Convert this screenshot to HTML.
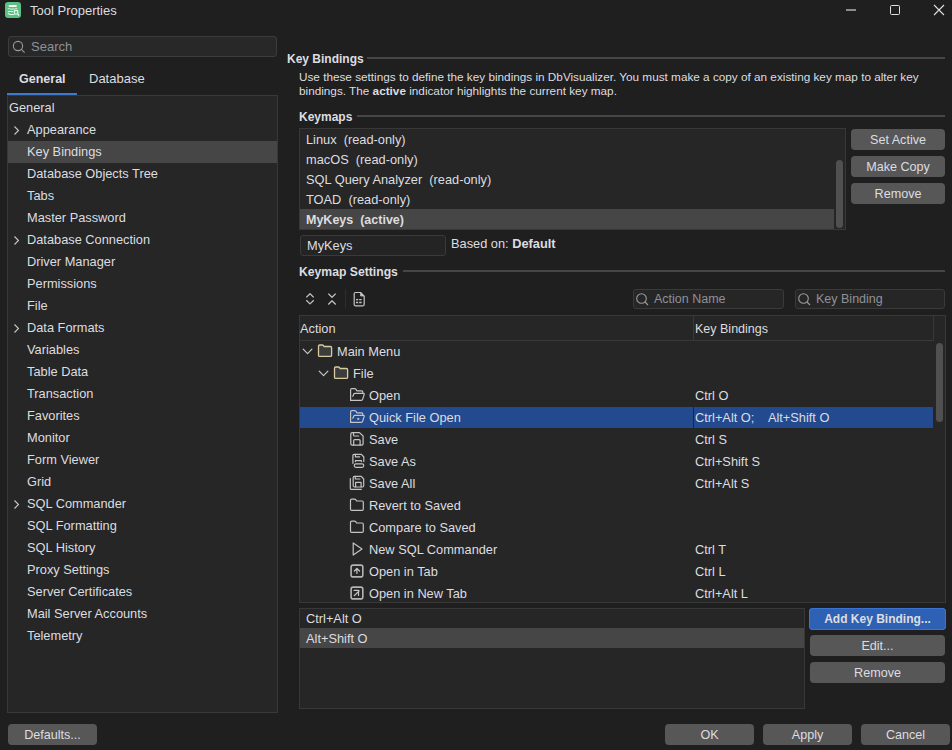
<!DOCTYPE html>
<html><head><meta charset="utf-8">
<style>
*{box-sizing:border-box;margin:0;padding:0}
html,body{width:952px;height:750px;overflow:hidden;background:#1f1f1f}
body{position:relative;font-family:"Liberation Sans",sans-serif;color:#dcdde0;font-size:13px}
.a{position:absolute;white-space:pre}
.b{font-weight:bold}
.btn{position:absolute;border-radius:4px;text-align:center;white-space:pre;color:#dcdde0}
svg{position:absolute;overflow:visible}
</style></head><body>
<svg style="left:5px;top:2px" width="16" height="16" viewBox="0 0 16 16">
  <rect x="0" y="0" width="16" height="16" rx="3.2" fill="#5cc283"/>
  <rect x="3.6" y="3.1" width="8.3" height="1.9" rx="0.95" fill="#f4fbf6"/>
  <g fill="none" stroke="#eef8f1" stroke-width="1.1" stroke-linecap="round">
    <path d="M3.2 6.5q4.4 1.3 8.6 0" stroke-opacity="0.75"/>
    <path d="M3.2 9.5h4.6"/>
    <path d="M3.2 11.4q1 1.1 3 1.1h2.6"/>
    <circle cx="11.1" cy="10.3" r="1.9"/><path d="M12.5 11.7l1.3 1.6"/>
  </g>
</svg>
<div class="a" style="left:30px;top:1px;line-height:20px;font-size:13px">Tool Properties</div>
<div class="a" style="left:846px;top:9px;width:10px;height:2px;background:#8c8c8c"></div>
<div class="a" style="left:890px;top:5px;width:10px;height:10px;border:1px solid #dedede;border-radius:1.5px"></div>
<svg style="left:934px;top:5px" width="10" height="10" viewBox="0 0 10 10"><path d="M0 0l10 10M10 0l-10 10" stroke="#e0e0e0" stroke-width="1.1"/></svg>
<div class="a" style="left:8px;top:36px;width:269px;height:21px;background:#282828;border:1px solid #3c3c3c;border-radius:3px"></div>
<svg style="left:12px;top:40px" width="14" height="14" viewBox="0 0 14 14"><circle cx="6" cy="6" r="4.6" fill="none" stroke="#9c9c9c" stroke-width="1.1"/><path d="M9.4 9.4l3.2 3.2" stroke="#9c9c9c" stroke-width="1.1"/></svg>
<div class="a" style="left:31px;top:37px;line-height:20px;font-size:13px;color:#8f9196">Search</div>
<div class="a b" style="left:19px;top:70px;line-height:18px;font-size:12.5px">General</div>
<div class="a" style="left:89px;top:70px;line-height:18px;font-size:13px">Database</div>
<div class="a" style="left:7px;top:93px;width:70px;height:2px;background:#3d79cf"></div>
<div class="a" style="left:7px;top:95px;width:271px;height:618px;background:#262626;border:1px solid #383838"></div>
<div class="a" style="left:9px;top:97px;line-height:22px;font-size:12.8px">General</div>
<div class="a" style="left:27px;top:119px;line-height:22px;font-size:12.8px">Appearance</div>
<svg style="left:14px;top:126px" width="5" height="9" viewBox="0 0 5 9"><path d="M0.5 0.5l4 4-4 4" fill="none" stroke="#c8c8c8" stroke-width="1.1"/></svg>
<div class="a" style="left:8px;top:141px;width:269px;height:22px;background:#464646"></div>
<div class="a" style="left:27px;top:141px;line-height:22px;font-size:12.8px">Key Bindings</div>
<div class="a" style="left:27px;top:163px;line-height:22px;font-size:12.8px">Database Objects Tree</div>
<div class="a" style="left:27px;top:185px;line-height:22px;font-size:12.8px">Tabs</div>
<div class="a" style="left:27px;top:207px;line-height:22px;font-size:12.8px">Master Password</div>
<div class="a" style="left:27px;top:229px;line-height:22px;font-size:12.8px">Database Connection</div>
<svg style="left:14px;top:236px" width="5" height="9" viewBox="0 0 5 9"><path d="M0.5 0.5l4 4-4 4" fill="none" stroke="#c8c8c8" stroke-width="1.1"/></svg>
<div class="a" style="left:27px;top:251px;line-height:22px;font-size:12.8px">Driver Manager</div>
<div class="a" style="left:27px;top:273px;line-height:22px;font-size:12.8px">Permissions</div>
<div class="a" style="left:27px;top:295px;line-height:22px;font-size:12.8px">File</div>
<div class="a" style="left:27px;top:317px;line-height:22px;font-size:12.8px">Data Formats</div>
<svg style="left:14px;top:324px" width="5" height="9" viewBox="0 0 5 9"><path d="M0.5 0.5l4 4-4 4" fill="none" stroke="#c8c8c8" stroke-width="1.1"/></svg>
<div class="a" style="left:27px;top:339px;line-height:22px;font-size:12.8px">Variables</div>
<div class="a" style="left:27px;top:361px;line-height:22px;font-size:12.8px">Table Data</div>
<div class="a" style="left:27px;top:383px;line-height:22px;font-size:12.8px">Transaction</div>
<div class="a" style="left:27px;top:405px;line-height:22px;font-size:12.8px">Favorites</div>
<div class="a" style="left:27px;top:427px;line-height:22px;font-size:12.8px">Monitor</div>
<div class="a" style="left:27px;top:449px;line-height:22px;font-size:12.8px">Form Viewer</div>
<div class="a" style="left:27px;top:471px;line-height:22px;font-size:12.8px">Grid</div>
<div class="a" style="left:27px;top:493px;line-height:22px;font-size:12.8px">SQL Commander</div>
<svg style="left:14px;top:500px" width="5" height="9" viewBox="0 0 5 9"><path d="M0.5 0.5l4 4-4 4" fill="none" stroke="#c8c8c8" stroke-width="1.1"/></svg>
<div class="a" style="left:27px;top:515px;line-height:22px;font-size:12.8px">SQL Formatting</div>
<div class="a" style="left:27px;top:537px;line-height:22px;font-size:12.8px">SQL History</div>
<div class="a" style="left:27px;top:559px;line-height:22px;font-size:12.8px">Proxy Settings</div>
<div class="a" style="left:27px;top:581px;line-height:22px;font-size:12.8px">Server Certificates</div>
<div class="a" style="left:27px;top:603px;line-height:22px;font-size:12.8px">Mail Server Accounts</div>
<div class="a" style="left:27px;top:625px;line-height:22px;font-size:12.8px">Telemetry</div>
<div class="btn" style="left:8px;top:724px;width:89px;height:21px;line-height:21px;background:#575757;font-size:12.6px;padding-top:1px">Defaults...</div>
<div class="a b" style="left:287px;top:50px;line-height:18px;font-size:12px">Key Bindings</div>
<div class="a" style="left:367px;top:57px;width:578px;height:2px;background:#464646"></div>
<div class="a" style="left:299px;top:69px;line-height:15px;font-size:11.75px">Use these settings to define the key bindings in DbVisualizer. You must make a copy of an existing key map to alter key</div>
<div class="a" style="left:299px;top:83px;line-height:15px;font-size:11.75px">bindings. The <b>active</b> indicator highlights the current key map.</div>
<div class="a b" style="left:299px;top:108px;line-height:18px;font-size:12px">Keymaps</div>
<div class="a" style="left:357px;top:115px;width:588px;height:2px;background:#464646"></div>
<div class="a" style="left:299px;top:128px;width:547px;height:102px;background:#262626;border:1px solid #383838"></div>
<div class="a" style="left:306px;top:130px;line-height:20px;font-size:12.8px">Linux  (read-only)</div>
<div class="a" style="left:306px;top:150px;line-height:20px;font-size:12.8px">macOS  (read-only)</div>
<div class="a" style="left:306px;top:170px;line-height:20px;font-size:12.8px">SQL Query Analyzer  (read-only)</div>
<div class="a" style="left:306px;top:190px;line-height:20px;font-size:12.8px">TOAD  (read-only)</div>
<div class="a" style="left:300px;top:209px;width:534px;height:20px;background:#464646"></div>
<div class="a b" style="left:306px;top:210px;line-height:20px;font-size:12.5px">MyKeys  (active)</div>
<div class="a" style="left:836px;top:160px;width:7px;height:68px;background:#505050;border-radius:3.5px"></div>
<div class="btn" style="left:851px;top:129px;width:94px;height:21px;line-height:21px;background:#575757;font-size:12.6px;padding-top:1px">Set Active</div>
<div class="btn" style="left:851px;top:156px;width:94px;height:21px;line-height:21px;background:#575757;font-size:12.6px;padding-top:1px">Make Copy</div>
<div class="btn" style="left:851px;top:183px;width:94px;height:21px;line-height:21px;background:#575757;font-size:12.6px;padding-top:1px">Remove</div>
<div class="a" style="left:300px;top:235px;width:146px;height:21px;background:#242424;border:1px solid #3a3a3a;border-radius:3px"></div>
<div class="a" style="left:307px;top:235px;line-height:21px;font-size:12.8px">MyKeys</div>
<div class="a" style="left:451px;top:234px;line-height:20px;font-size:12.8px">Based on: <b>Default</b></div>
<div class="a b" style="left:299px;top:263px;line-height:18px;font-size:12.2px">Keymap Settings</div>
<div class="a" style="left:403px;top:270px;width:542px;height:2px;background:#464646"></div>
<svg style="left:0px;top:0px" width="952" height="750" viewBox="0 0 952 750"><g fill="none" stroke="#c4c4c4" stroke-width="1.25" stroke-linecap="butt" stroke-linejoin="round"><path d="M306.3 297.4l3.7-3.7 3.7 3.7M306.3 300.2l3.7 3.7 3.7-3.7"/><path d="M328.3 293.6l3.7 3.7 3.7-3.7M328.3 304.5l3.7-3.7 3.7 3.7"/></g></svg>
<div class="a" style="left:345px;top:289px;width:1px;height:19px;background:#2e2e2e"></div>
<svg style="left:0px;top:0px" width="952" height="750" viewBox="0 0 952 750"><path d="M354.2 293.7q0-1.2 1.2-1.2h5.2l3.6 3.6v8.5q0 1.2-1.2 1.2h-7.6q-1.2 0-1.2-1.2z" fill="none" stroke="#c4c4c4" stroke-width="1.2" stroke-linecap="round" stroke-linejoin="round"/><path d="M360.6 292.6v3.4h3.4z" fill="#c4c4c4" stroke="#c4c4c4" stroke-width="0.8" stroke-linejoin="round"/><path d="M356 299.6h2.2M359.2 299.6h2.4M356 302.5h2.2M359.2 302.5h2.4" stroke="#c4c4c4" stroke-width="1.3"/></svg>
<div class="a" style="left:633px;top:289px;width:151px;height:20px;background:#262626;border:1px solid #3a3a3a;border-radius:3px"></div>
<svg style="left:635px;top:292px" width="14" height="14" viewBox="0 0 14 14"><circle cx="6.5" cy="6.5" r="4.8" fill="none" stroke="#9c9c9c" stroke-width="1.1"/><path d="M10 10l3 3" stroke="#9c9c9c" stroke-width="1.1"/></svg>
<div class="a" style="left:654px;top:289px;line-height:20px;font-size:12.5px;color:#8f9196">Action Name</div>
<div class="a" style="left:795px;top:289px;width:150px;height:20px;background:#262626;border:1px solid #3a3a3a;border-radius:3px"></div>
<svg style="left:797px;top:292px" width="14" height="14" viewBox="0 0 14 14"><circle cx="6.5" cy="6.5" r="4.8" fill="none" stroke="#9c9c9c" stroke-width="1.1"/><path d="M10 10l3 3" stroke="#9c9c9c" stroke-width="1.1"/></svg>
<div class="a" style="left:816px;top:289px;line-height:20px;font-size:12.5px;color:#8f9196">Key Binding</div>
<div class="a" style="left:299px;top:315px;width:647px;height:288px;background:#262626;border:1px solid #383838"></div>
<div class="a" style="left:300px;top:340px;width:633px;height:1px;background:#383838"></div>
<div class="a" style="left:933px;top:316px;width:1px;height:25px;background:#383838"></div>
<div class="a" style="left:693px;top:316px;width:1px;height:25px;background:#383838"></div>
<div class="a" style="left:300px;top:318px;line-height:22px;font-size:12.8px">Action</div>
<div class="a" style="left:695px;top:318px;line-height:22px;font-size:12.5px">Key Bindings</div>
<div class="a" style="left:936px;top:343px;width:7px;height:79px;background:#505050;border-radius:3.5px"></div>
<svg style="left:0px;top:0px" width="952" height="750" viewBox="0 0 952 750"><path d="M303.2 349.2l4.4 4.5 4.3-4.5" fill="none" stroke="#c8c8c8" stroke-width="1.2" stroke-linecap="round" stroke-linejoin="round"/></svg>
<svg style="left:0px;top:0px" width="952" height="750" viewBox="0 0 952 750"><path d="M318.5 346.2q0-1.2 1.2-1.2h2.6q.8 0 1.2 .6l.6 .9h6.3q1.2 0 1.2 1.2v7.5q0 1.2-1.2 1.2h-10.7q-1.2 0-1.2-1.2z" fill="#3c3c3c" stroke="#d8cba0" stroke-width="1.3"/></svg>
<div class="a" style="left:337px;top:341px;line-height:22px;font-size:12.8px">Main Menu</div>
<svg style="left:0px;top:0px" width="952" height="750" viewBox="0 0 952 750"><path d="M319.2 371.2l4.4 4.5 4.3-4.5" fill="none" stroke="#c8c8c8" stroke-width="1.2" stroke-linecap="round" stroke-linejoin="round"/></svg>
<svg style="left:0px;top:0px" width="952" height="750" viewBox="0 0 952 750"><path d="M334.5 368.2q0-1.2 1.2-1.2h2.6q.8 0 1.2 .6l.6 .9h6.3q1.2 0 1.2 1.2v7.5q0 1.2-1.2 1.2h-10.7q-1.2 0-1.2-1.2z" fill="#3c3c3c" stroke="#d8cba0" stroke-width="1.3"/></svg>
<div class="a" style="left:353px;top:363px;line-height:22px;font-size:12.8px">File</div>
<svg style="left:0px;top:0px" width="952" height="750" viewBox="0 0 952 750"><path d="M350.6 400.4V389.8q0-1.2 1.2-1.2h3q.6 0 1 .5l1 1.7h4.8q1.2 0 1.2 1.2v.6" fill="none" stroke="#c4c4c4" stroke-width="1.2" stroke-linecap="round" stroke-linejoin="round"/><path d="M352.8 396.3l.8-1.9q.4-1 1.4-1h8.4q1.1 0 .8 1l-1.6 5q-.3 1-1.3 1h-10.7" fill="none" stroke="#c4c4c4" stroke-width="1.2" stroke-linecap="round" stroke-linejoin="round"/></svg>
<div class="a" style="left:369px;top:385px;line-height:22px;font-size:12.8px">Open</div>
<div class="a" style="left:695px;top:385px;line-height:22px;font-size:12.8px">Ctrl O</div>
<div class="a" style="left:300px;top:407px;width:633px;height:21px;background:#234a8f"></div>
<div class="a" style="left:693px;top:407px;width:1px;height:21px;background:#262626"></div>
<svg style="left:0px;top:0px" width="952" height="750" viewBox="0 0 952 750"><path d="M350.6 422.4V411.8q0-1.2 1.2-1.2h3q.6 0 1 .5l1 1.7h4.8q1.2 0 1.2 1.2v.6" fill="none" stroke="#c4c4c4" stroke-width="1.2" stroke-linecap="round" stroke-linejoin="round"/><path d="M352.8 418.3l.8-1.9q.4-1 1.4-1h8.4q1.1 0 .8 1l-1.6 5q-.3 1-1.3 1h-10.7" fill="none" stroke="#c4c4c4" stroke-width="1.2" stroke-linecap="round" stroke-linejoin="round"/><circle cx="358.3" cy="418.9" r="1.1" fill="#c4c4c4"/></svg>
<div class="a" style="left:369px;top:407px;line-height:22px;font-size:12.8px">Quick File Open</div>
<div class="a" style="left:695px;top:407px;line-height:22px;font-size:12.8px">Ctrl+Alt O;    Alt+Shift O</div>
<svg style="left:0px;top:0px" width="952" height="750" viewBox="0 0 952 750"><path d="M350.8 434q0-1.4 1.4-1.4h7.3l3.6 3.4v7.7q0 1.4-1.4 1.4h-9.5q-1.4 0-1.4-1.4z" fill="none" stroke="#c4c4c4" stroke-width="1.2" stroke-linecap="round" stroke-linejoin="round"/><path d="M353.5 432.6v2.4q0 1 1 1h4.2M353.7 445.1v-4.5q0-1 1-1h4.4q1 0 1 1v4.5" fill="none" stroke="#c4c4c4" stroke-width="1.2" stroke-linecap="round" stroke-linejoin="round"/></svg>
<div class="a" style="left:369px;top:429px;line-height:22px;font-size:12.8px">Save</div>
<div class="a" style="left:695px;top:429px;line-height:22px;font-size:12.8px">Ctrl S</div>
<svg style="left:0px;top:0px" width="952" height="750" viewBox="0 0 952 750"><path d="M352.9 463.3v-7.9q0-1 1-1h7.5l2.4 2.6v4.6" fill="none" stroke="#c4c4c4" stroke-width="1.2" stroke-linecap="round" stroke-linejoin="round"/><path d="M355.4 454.4v2.4h4.3M355.4 461.6v-1h6v1" fill="none" stroke="#c4c4c4" stroke-width="1.2" stroke-linecap="round" stroke-linejoin="round"/><rect x="354.2" y="463.8" width="9.6" height="3.6" rx="1.8" fill="none" stroke="#c4c4c4" stroke-width="1.2" stroke-linecap="round" stroke-linejoin="round"/></svg>
<div class="a" style="left:369px;top:451px;line-height:22px;font-size:12.8px">Save As</div>
<div class="a" style="left:695px;top:451px;line-height:22px;font-size:12.8px">Ctrl+Shift S</div>
<svg style="left:0px;top:0px" width="952" height="750" viewBox="0 0 952 750"><path d="M350.3 478.6v9.8q0 1 1 1h10" fill="none" stroke="#c4c4c4" stroke-width="1.2" stroke-linecap="round" stroke-linejoin="round"/><path d="M353.2 477.6q0-1.2 1.2-1.2h6.9l2.4 2.6v6.8q0 1.2-1.2 1.2h-8.1q-1.2 0-1.2-1.2z" fill="none" stroke="#c4c4c4" stroke-width="1.2" stroke-linecap="round" stroke-linejoin="round"/><path d="M355.3 476.4v2.6h4.6M355.6 487v-4.6h5.5v4.6" fill="none" stroke="#c4c4c4" stroke-width="1.2" stroke-linecap="round" stroke-linejoin="round"/></svg>
<div class="a" style="left:369px;top:473px;line-height:22px;font-size:12.8px">Save All</div>
<div class="a" style="left:695px;top:473px;line-height:22px;font-size:12.8px">Ctrl+Alt S</div>
<svg style="left:0px;top:0px" width="952" height="750" viewBox="0 0 952 750"><path d="M350.5 500.3q0-1.2 1.2-1.2h2.8q.8 0 1.2 .6l.9 1.3h5.5q1.2 0 1.2 1.2v7q0 1.2-1.2 1.2h-10.4q-1.2 0-1.2-1.2z" fill="none" stroke="#c4c4c4" stroke-width="1.2" stroke-linecap="round" stroke-linejoin="round"/></svg>
<div class="a" style="left:369px;top:495px;line-height:22px;font-size:12.8px">Revert to Saved</div>
<svg style="left:0px;top:0px" width="952" height="750" viewBox="0 0 952 750"><path d="M350.5 522.3q0-1.2 1.2-1.2h2.8q.8 0 1.2 .6l.9 1.3h5.5q1.2 0 1.2 1.2v7q0 1.2-1.2 1.2h-10.4q-1.2 0-1.2-1.2z" fill="none" stroke="#c4c4c4" stroke-width="1.2" stroke-linecap="round" stroke-linejoin="round"/></svg>
<div class="a" style="left:369px;top:517px;line-height:22px;font-size:12.8px">Compare to Saved</div>
<svg style="left:0px;top:0px" width="952" height="750" viewBox="0 0 952 750"><path d="M353.2 542.9v12.2l8.8-6.1z" fill="none" stroke="#c4c4c4" stroke-width="1.2" stroke-linecap="round" stroke-linejoin="round"/></svg>
<div class="a" style="left:369px;top:539px;line-height:22px;font-size:12.8px">New SQL Commander</div>
<div class="a" style="left:695px;top:539px;line-height:22px;font-size:12.8px">Ctrl T</div>
<svg style="left:0px;top:0px" width="952" height="750" viewBox="0 0 952 750"><rect x="351.1" y="565.1" width="11.7" height="11.8" rx="2" fill="none" stroke="#b4b4b4" stroke-width="1.6"/><path d="M356.9 573.5v-4.8M354.4 571l2.5-2.5 2.7 2.5" fill="none" stroke="#c4c4c4" stroke-width="1.2" stroke-linecap="round" stroke-linejoin="round"/></svg>
<div class="a" style="left:369px;top:561px;line-height:22px;font-size:12.8px">Open in Tab</div>
<div class="a" style="left:695px;top:561px;line-height:22px;font-size:12.8px">Ctrl L</div>
<svg style="left:0px;top:0px" width="952" height="750" viewBox="0 0 952 750"><rect x="351.1" y="587.1" width="11.7" height="11.8" rx="2" fill="none" stroke="#b4b4b4" stroke-width="1.6"/><path d="M354.4 595.5l4.8-4.6M354.1 590.4h4.4v5.1" fill="none" stroke="#c4c4c4" stroke-width="1.2" stroke-linecap="round" stroke-linejoin="round"/></svg>
<div class="a" style="left:369px;top:583px;line-height:22px;font-size:12.8px">Open in New Tab</div>
<div class="a" style="left:695px;top:583px;line-height:22px;font-size:12.8px">Ctrl+Alt L</div>
<div class="a" style="left:299px;top:608px;width:506px;height:101px;background:#262626;border:1px solid #383838"></div>
<div class="a" style="left:306px;top:609px;line-height:20px;font-size:12.8px">Ctrl+Alt O</div>
<div class="a" style="left:300px;top:628px;width:504px;height:20px;background:#464646"></div>
<div class="a" style="left:306px;top:629px;line-height:20px;font-size:12.8px">Alt+Shift O</div>
<div class="btn" style="left:809px;top:608px;width:137px;height:22px;line-height:22px;background:#2e61b3;font-size:12px;font-weight:bold;box-shadow:inset 0 0 0 1px #3a74d0">Add Key Binding...</div>
<div class="btn" style="left:810px;top:635px;width:135px;height:21px;line-height:21px;background:#575757;font-size:12.6px;padding-top:1px">Edit...</div>
<div class="btn" style="left:810px;top:662px;width:135px;height:21px;line-height:21px;background:#575757;font-size:12.6px;padding-top:1px">Remove</div>
<div class="btn" style="left:665px;top:724px;width:89px;height:21px;line-height:21px;background:#575757;font-size:12.6px;padding-top:1px">OK</div>
<div class="btn" style="left:763px;top:724px;width:89px;height:21px;line-height:21px;background:#575757;font-size:12.6px;padding-top:1px">Apply</div>
<div class="btn" style="left:861px;top:724px;width:89px;height:21px;line-height:21px;background:#575757;font-size:12.6px;padding-top:1px">Cancel</div>
</body></html>
